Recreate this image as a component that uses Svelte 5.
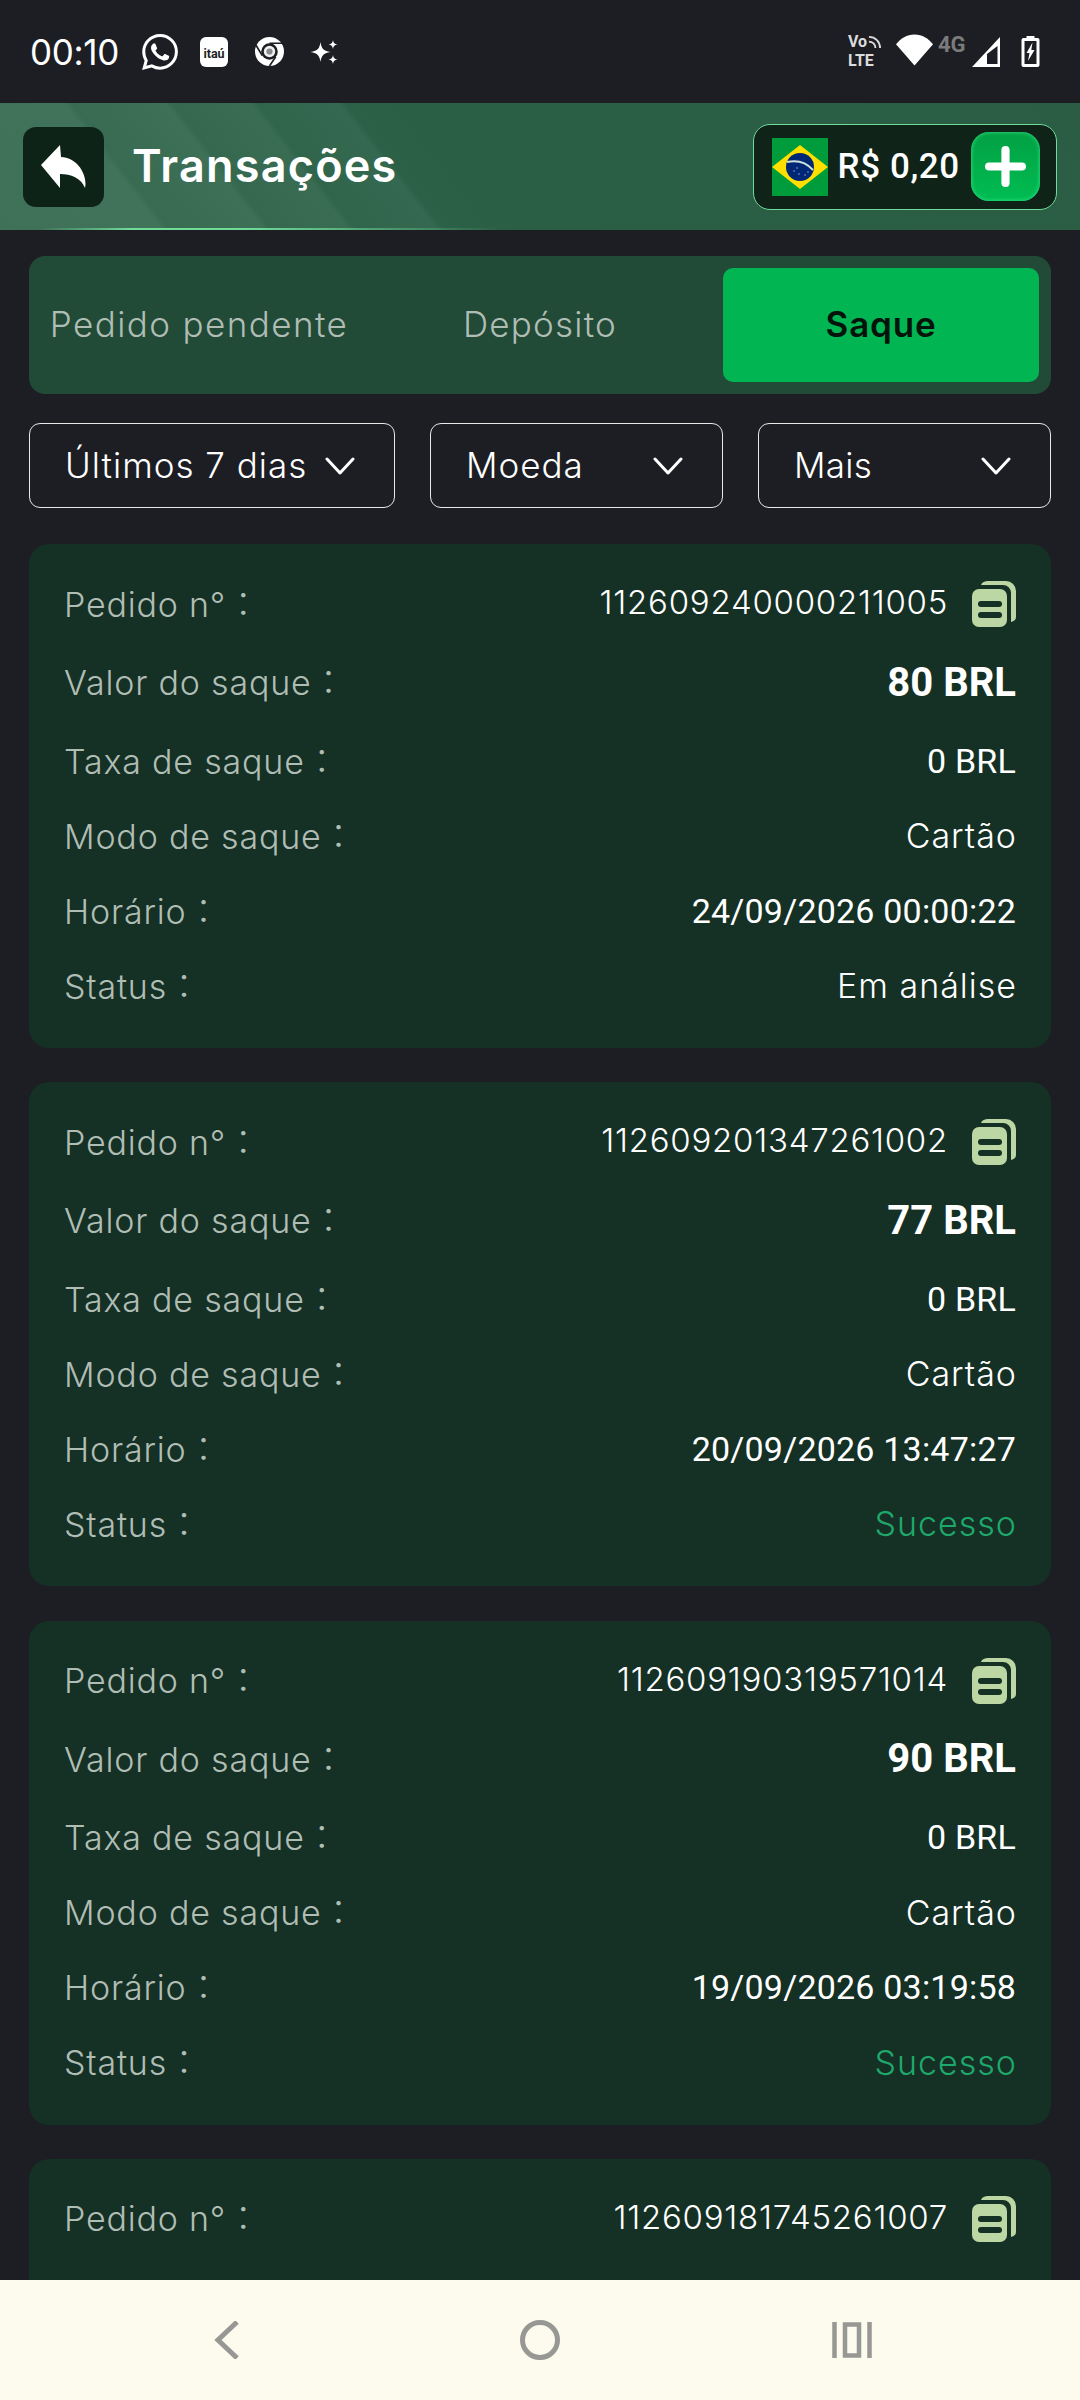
<script>
  const cards = [
    { id: '112609240000211005', amount: '80 BRL', date: '24/09/2026 00:00:22', status: 'Em análise', ok: false },
    { id: '112609201347261002', amount: '77 BRL', date: '20/09/2026 13:47:27', status: 'Sucesso', ok: true },
    { id: '112609190319571014', amount: '90 BRL', date: '19/09/2026 03:19:58', status: 'Sucesso', ok: true },
    { id: '112609181745261007' }
  ];
  const filters = [
    { label: 'Últimos 7 dias', cls: 'f1' },
    { label: 'Moeda', cls: 'f2' },
    { label: 'Mais', cls: 'f3' }
  ];
</script>

<div class="screen">
  <div class="status">
    <div class="status-left">
      <span class="time">00:10</span>
      <svg class="wa" viewBox="0 0 24 24" fill="#fff"><path d="M17.472 14.382c-.297-.149-1.758-.867-2.03-.967-.273-.099-.471-.148-.67.15-.197.297-.767.966-.94 1.164-.173.199-.347.223-.644.075-.297-.15-1.255-.463-2.39-1.475-.883-.788-1.48-1.761-1.653-2.059-.173-.297-.018-.458.13-.606.134-.133.298-.347.446-.52.149-.174.198-.298.298-.497.099-.198.05-.371-.025-.52-.075-.149-.669-1.612-.916-2.207-.242-.579-.487-.5-.669-.51-.173-.008-.371-.01-.57-.01-.198 0-.52.074-.792.372-.272.297-1.04 1.016-1.04 2.479 0 1.462 1.065 2.875 1.213 3.074.149.198 2.096 3.2 5.077 4.487.709.306 1.262.489 1.694.625.712.227 1.36.195 1.871.118.571-.085 1.758-.719 2.006-1.413.248-.694.248-1.289.173-1.413-.074-.124-.272-.198-.57-.347m-5.421 7.403h-.004a9.87 9.87 0 01-5.031-1.378l-.361-.214-3.741.982.998-3.648-.235-.374a9.86 9.86 0 01-1.51-5.26c.001-5.45 4.436-9.884 9.888-9.884 2.64 0 5.122 1.03 6.988 2.898a9.825 9.825 0 012.893 6.994c-.003 5.45-4.437 9.884-9.885 9.884m8.413-18.297A11.815 11.815 0 0012.05 0C5.495 0 .16 5.335.157 11.892c0 2.096.547 4.142 1.588 5.945L.057 24l6.305-1.654a11.882 11.882 0 005.683 1.448h.005c6.554 0 11.89-5.335 11.893-11.893a11.821 11.821 0 00-3.48-8.413z"/></svg>
      <span class="itau"><span>itaú</span></span>
      <svg class="chrome" viewBox="0 0 28 28">
        <circle cx="14" cy="14" r="14" fill="#fff"/>
        <circle cx="14" cy="14" r="8" fill="#1c1e23"/>
        <circle cx="14" cy="14" r="5.500" fill="#f0f0f0"/>
        <circle cx="14" cy="14" r="3" fill="#8a8b8d"/>
        <path d="M14 6h13M7 18 1 8M20 19l-6 9" stroke="#1c1e23" stroke-width="1.600" fill="none"/>
      </svg>
      <svg class="spark" viewBox="0 0 28 26" fill="#fff">
        <path d="M10.500 3c1 6.500 2.500 8.500 10 10-7.500 1.500-9 3.500-10 10-1-6.500-2.500-8.500-10-10 7.500-1.500 9-3.500 10-10z"/>
        <path d="M23 1c.5 3 1.200 3.800 4.500 4.500-3.300.7-4 1.500-4.500 4.500-.5-3-1.200-3.800-4.500-4.500C21.800 4.800 22.500 4 23 1zM23 16c.5 3 1.200 3.800 4.500 4.500-3.300.7-4 1.500-4.500 4.500-.5-3-1.200-3.800-4.500-4.500 3.300-.7 4-1.500 4.500-4.500z"/>
      </svg>
    </div>
    <div class="status-right">
      <div class="volte">
        <div class="vo">Vo<svg viewBox="0 0 14 14" fill="none" stroke="#dcdcdc" stroke-width="2"><path d="M1 6c4 0 7 3 7 7M1 1c7 0 12 5 12 12"/></svg></div>
        <div class="lte">LTE</div>
      </div>
      <svg class="wifi" viewBox="0 0 38 32" fill="#fff"><path d="M0 10C5 4 11 0 19 0s14 4 19 10L19 32z"/></svg>
      <span class="fourg">4G</span>
      <svg class="signal" viewBox="0 0 28 30"><path d="M28 0v30H0z" fill="#fff"/><path d="M25.500 9v18H15V17z" fill="#1c1e23"/></svg>
      <svg class="battery" viewBox="0 0 18 31">
        <path d="M5 0h8v2h3a2 2 0 0 1 2 2v25a2 2 0 0 1-2 2H2a2 2 0 0 1-2-2V4a2 2 0 0 1 2-2h3z" fill="#fff"/>
        <path d="M3 5h12v23H3z" fill="#1c1e23"/>
        <path d="M11 6.500 5 17h3l-1.500 8L13 14h-3.200z" fill="#fff"/>
      </svg>
    </div>
  </div>

  <header class="top">
    <div class="back">
      <svg viewBox="0 0 46 44" fill="#fff"><path d="M19 0 0 20l19 23V29c11 0 21 4 25 14 3-13-8-31-24-31z"/></svg>
    </div>
    <h1>Transações</h1>
    <div class="balance">
      <svg class="flag" viewBox="0 0 56 58">
        <rect width="56" height="58" fill="#009b3a"/>
        <path d="M28 7 56 29 28 51 0 29z" fill="#fedf00"/>
        <circle cx="28" cy="29" r="14" fill="#002776"/>
        <path d="M15 24c9-2 19 0 26 8" stroke="#cfe0dc" stroke-width="2" fill="none"/>
        <g fill="#a8c0e8"><circle cx="22" cy="33" r=".7"/><circle cx="27" cy="36" r=".7"/><circle cx="33" cy="37" r=".7"/><circle cx="25" cy="30" r=".7"/><circle cx="36" cy="34" r=".7"/></g>
      </svg>
      <span class="amount-top">R$ 0,20</span>
      <div class="plus">
        <svg viewBox="0 0 40 40" fill="none" stroke="#fff" stroke-width="8" stroke-linecap="round"><path d="M20 4v32M4 20h32"/></svg>
      </div>
    </div>
  </header>

  <main class="content">
    <div class="tabs">
      <div class="tab t1">Pedido pendente</div>
      <div class="tab t2">Depósito</div>
      <div class="tab active">Saque</div>
    </div>

    <div class="filters">
      {#each filters as f}
        <div class="filter {f.cls}">
          <span>{f.label}</span>
          <svg viewBox="0 0 30 18" fill="none" stroke="#fff" stroke-width="3" stroke-linecap="round" stroke-linejoin="round"><path d="M2 2l13 14L28 2"/></svg>
        </div>
      {/each}
    </div>

    {#each cards as c}
      <section class="card">
        <div class="row">
          <span class="label">Pedido n°：</span>
          <span class="value with-icon">
            <span class="num">{c.id}</span>
            <svg class="copy" viewBox="0 0 46 47">
              <path d="M18 1h18a10 10 0 0 1 10 10v26c0 3-2 4-5 5V13a8 8 0 0 0-8-8H11c1-3 4-4 7-4z" fill="#bcd7a4"/>
              <rect x="2" y="9" width="35" height="38" rx="7" fill="#bcd7a4"/>
              <rect x="8" y="21" width="24" height="6" rx="3" fill="#153024"/>
              <rect x="8" y="32" width="24" height="6" rx="3" fill="#153024"/>
            </svg>
          </span>
        </div>
        {#if c.amount}
          <div class="row big">
            <span class="label">Valor do saque：</span>
            <span class="value rb-bold">{c.amount}</span>
          </div>
          <div class="row">
            <span class="label">Taxa de saque：</span>
            <span class="value rb">0 BRL</span>
          </div>
          <div class="row">
            <span class="label">Modo de saque：</span>
            <span class="value txt">Cartão</span>
          </div>
          <div class="row">
            <span class="label">Horário：</span>
            <span class="value rb">{c.date}</span>
          </div>
          <div class="row">
            <span class="label">Status：</span>
            <span class="value txt" class:ok={c.ok}>{c.status}</span>
          </div>
        {/if}
      </section>
    {/each}
  </main>

  <nav class="nav">
    <svg class="nav-back" viewBox="0 0 26 38" fill="none" stroke="#979793" stroke-width="5"><path d="M23 1 4 19l19 18"/></svg>
    <svg class="nav-home" viewBox="0 0 40 40" fill="none" stroke="#979793" stroke-width="5"><circle cx="20" cy="20" r="17.500"/></svg>
    <svg class="nav-recent" viewBox="0 0 40 36" fill="none" stroke="#979793" stroke-width="4.500"><path d="M2.500 0v36M37.500 0v36"/><rect x="13" y="2.500" width="14" height="31"/></svg>
  </nav>
</div>

<style>
  :global(body) {
    margin: 0;
    background: #1c1e23;
  }
  .screen {
    width: 1080px;
    height: 2400px;
    display: flex;
    flex-direction: column;
    overflow: hidden;
    background: #1c1e23;
    font-family: Inter, "Noto Sans CJK JP", sans-serif;
    color: #fff;
  }
  .status {
    height: 103px;
    flex: none;
    display: flex;
    justify-content: space-between;
    align-items: center;
    padding: 0 40px 0 30px;
    box-sizing: border-box;
  }
  .status-left, .status-right { display: flex; align-items: center; }
  .time {
    font-size: 35px;
    font-weight: 400;
    width: 112px;
    letter-spacing: -0.3px;
  }
  .wa { width: 36px; height: 36px; }
  .itau {
    width: 28px; height: 30px; margin-left: 22px;
    background: #fff; border-radius: 6px;
    display: flex; align-items: center; justify-content: center;
  }
  .itau span {
    font: 700 12.500px Roboto, sans-serif;
    color: #1c1e23;
    margin-top: 3px;
  }
  .chrome { width: 29px; height: 29px; margin-left: 27px; }
  .spark { width: 28px; height: 26px; margin-left: 26px; }
  .volte { width: 34px; color: #dcdcdc; font: 700 16px/18.500px Roboto, sans-serif; }
  .vo { display: flex; align-items: center; gap: 1px; }
  .vo svg { width: 13px; height: 13px; }
  .wifi { width: 37px; height: 32px; margin-left: 14px; margin-bottom: 4px; }
  .fourg {
    font: 700 22px/20px Roboto, sans-serif;
    color: #7b7b7b;
    margin-left: 5px;
    margin-bottom: 14px;
    width: 30px;
    white-space: nowrap;
  }
  .signal { width: 28px; height: 30px; margin-left: 4px; }
  .battery { width: 19px; height: 31px; margin-left: 21px; }

  .top {
    height: 127px;
    flex: none;
    box-sizing: border-box;
    display: flex;
    align-items: center;
    padding: 0 23px 0 23px;
    position: relative;
    background: linear-gradient(52deg,
      #3f7158 0, #41735a 128px, #386b52 134px, #3e7058 208px, #35684f 214px,
      #396c53 275px, #31654b 281px, #346850 344px, #2d6147 350px, #2b5f45 410px, #2a5d44 100%);
  }
  .top::after {
    content: "";
    position: absolute;
    left: 40px; bottom: 0;
    width: 460px; height: 2px;
    background: linear-gradient(90deg, transparent, #6fdc98 20%, #6fdc98 45%, transparent);
  }
  .back {
    width: 81px; height: 80px;
    border-radius: 13px;
    background: #0e2317;
    display: flex; align-items: center; justify-content: center;
  }
  .back svg { width: 46px; height: 44px; }
  h1 {
    margin: 0 0 0 28px;
    font-size: 45px;
    font-weight: 600;
    letter-spacing: 1.2px;
    padding-bottom: 3px;
  }
  .balance {
    margin-left: auto;
    width: 304px; height: 86px;
    box-sizing: border-box;
    border: 1.5px solid #6fdc98;
    border-radius: 17px;
    background: #0f2318;
    display: flex; align-items: center;
    padding: 0 16.500px;
  }
  .flag { width: 58px; height: 58px; flex: none; }
  .amount-top {
    font: 500 35px Roboto, sans-serif;
    margin-left: 9px;
    letter-spacing: 0.6px;
    white-space: nowrap;
  }
  .plus {
    margin-left: auto;
    width: 69px; height: 69px;
    flex: none;
    border-radius: 18px;
    background: linear-gradient(#02a043, #01bd53);
    box-shadow: inset 0 0 4px #35e58a;
    display: flex; align-items: center; justify-content: center;
  }
  .plus svg { width: 41px; height: 41px; }

  .content {
    flex: 1;
    min-height: 0;
    overflow: hidden;
    padding: 26px 29px 0;
    box-sizing: border-box;
    display: flex;
    flex-direction: column;
  }
  .tabs {
    flex: none;
    height: 138px;
    box-sizing: border-box;
    padding: 12px;
    background: #214a37;
    border-radius: 16px;
    display: grid;
    grid-template-columns: repeat(3, 1fr);
    column-gap: 25px;
  }
  .tab {
    display: flex; align-items: center; justify-content: center;
    font-size: 35px;
    font-weight: 300;
    color: #b0bdb5;
    border-radius: 10px;
    white-space: nowrap;
    padding-bottom: 3px;
  }
  .t1 { letter-spacing: 1.4px; }
  .t2 { letter-spacing: 1.2px; }
  .tab.active {
    background: #01b552;
    color: #04140b;
    font-weight: 600;
    letter-spacing: 0.8px;
  }
  .filters {
    flex: none;
    display: flex;
    justify-content: space-between;
    margin: 29px 0 36px;
  }
  .filter {
    height: 85px;
    box-sizing: border-box;
    border: 1.5px solid #e8e8e8;
    border-radius: 11px;
    display: flex; align-items: center; justify-content: space-between;
    padding: 0 39px 0 35px;
    font-size: 35px;
    font-weight: 300;
    white-space: nowrap;
    letter-spacing: 1px;
  }
  .filter span { padding-bottom: 2px; }
  .filter svg { width: 30px; height: 18px; flex: none; }
  .f1 { width: 366px; }
  .f2, .f3 { width: 293px; }
  .f3 { letter-spacing: 0.3px; }
  .card {
    flex: none;
    height: 504px;
    box-sizing: border-box;
    background: #153024;
    border-radius: 20px;
    padding: 22px 35px 25px;
    margin-bottom: 34.300px;
  }
  .row {
    height: 75px;
    display: flex;
    justify-content: space-between;
    align-items: center;
    font-size: 34px;
    font-weight: 300;
    white-space: nowrap;
  }
  .row.big { height: 82px; }
  .label {
    color: #b0bdb5;
    letter-spacing: 0.8px;
    padding-bottom: 3px;
  }
  .txt { letter-spacing: 1px; margin-right: -1px; }
  .with-icon { display: flex; align-items: center; }
  .num { font-size: 33px; letter-spacing: 0.75px; padding-bottom: 3px; }
  .copy { width: 46px; height: 47px; margin-left: 22px; }
  .rb { font: 400 34px Roboto, sans-serif; letter-spacing: 0.2px; }
  .rb-bold { font: 700 40px Roboto, sans-serif; letter-spacing: 0; }
  .ok { color: #1fa86c; }

  .nav {
    height: 120px;
    flex: none;
    background: #fdfbee;
    display: grid;
    grid-template-columns: 520px 40px 272px 40px;
    align-items: center;
    justify-items: start;
  }
  .nav-back { width: 26px; height: 38px; margin-left: 214px; grid-column: 1; }
  .nav-home { width: 40px; height: 40px; grid-column: 2; }
  .nav-recent { width: 40px; height: 36px; grid-column: 4; }
</style>
